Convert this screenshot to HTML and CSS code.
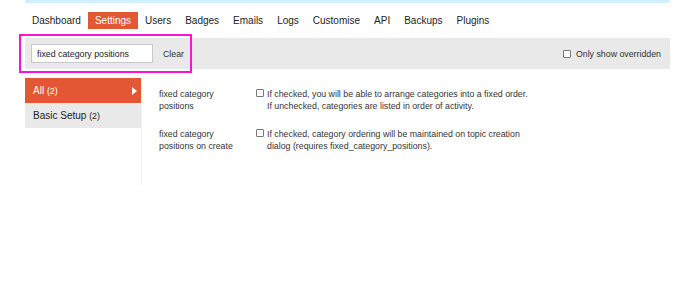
FILE: index.html
```html
<!DOCTYPE html>
<html lang="en">
<head>
    <meta charset="UTF-8">
    <title>Admin - Settings</title>
    <link rel="stylesheet" href="styles.css">
</head>
<body>
<div class="wrap">
    <div class="topbar"></div>
    <ul class="nav">
        <li>Dashboard</li>
        <li class="active">Settings</li>
        <li>Users</li>
        <li>Badges</li>
        <li>Emails</li>
        <li>Logs</li>
        <li>Customise</li>
        <li>API</li>
        <li>Backups</li>
        <li>Plugins</li>
    </ul>
    <div class="filters">
        <div class="search">
            <input type="text" class="filter-txt" value="fixed category positions">
            <span class="clear">Clear</span>
        </div>
        <label class="overridden"><input type="checkbox" class="cb"> Only show overridden</label>
    </div>
    <div class="main">
        <ul class="side">
            <li class="current"><span>All <small>(2)</small></span><i class="arrow"></i></li>
            <li><span>Basic Setup <small>(2)</small></span></li>
        </ul>
        <div class="settings">
            <div class="row">
                <div class="name">fixed category<br>positions</div>
                <div class="value">
                    <input type="checkbox" class="cb">
                    <p>If checked, you will be able to arrange categories into a fixed order.<br>If unchecked, categories are listed in order of activity.</p>
                </div>
            </div>
            <div class="row">
                <div class="name">fixed category<br>positions on create</div>
                <div class="value">
                    <input type="checkbox" class="cb">
                    <p>If checked, category ordering will be maintained on topic creation<br>dialog (requires fixed_category_positions).</p>
                </div>
            </div>
        </div>
    </div>
</div>
</body>
</html>
```

FILE: styles.css
```css
* {
    margin: 0;
    padding: 0;
    box-sizing: border-box;
}
body {
    font-family: "Liberation Sans", Arial, sans-serif;
    color: #222;
    background: #fff;
}
ul {
    list-style-type: none;
}
.wrap {
    width: 645px;
    margin-left: 25px;
}
.topbar {
    height: 3px;
    background-color: #d1f0ff;
}
.nav {
    display: flex;
    margin-top: 9px;
    font-size: 10px;
}
.nav li {
    padding: 0 7px;
    line-height: 17px;
    height: 17px;
}
.nav .active {
    background-color: #e45735;
    color: #fff;
}
.filters {
    display: flex;
    justify-content: space-between;
    align-items: center;
    margin-top: 9px;
    height: 31px;
    background-color: #e9e9e9;
    font-size: 8.8px;
}
.search {
    position: relative;
    display: flex;
    align-items: center;
    padding: 6px 2px 6px 6px;
}
/* pink highlight box drawn over the search */
.search:after {
    content: "";
    position: absolute;
    left: -6px;
    right: -6px;
    top: -4px;
    bottom: -4px;
    border: 2px solid #fb13cf;
}
.filter-txt {
    width: 122px;
    height: 19px;
    padding: 0 5px;
    border: 1px solid #c8c8c8;
    outline: none;
    font-family: inherit;
    font-size: 8.8px;
    color: #222;
    background: #fff;
}
.clear {
    margin-left: 10px;
    color: #333;
}
.overridden {
    display: flex;
    align-items: center;
    padding-right: 9px;
    color: #333;
}
.overridden .cb {
    margin-right: 5px;
}
.cb {
    appearance: none;
    -webkit-appearance: none;
    width: 8px;
    height: 8px;
    border: 1px solid #777;
    border-radius: 1px;
    background: #fff;
    flex-shrink: 0;
}
.main {
    display: flex;
    margin-top: 9px;
}
.side {
    width: 116px;
}
.side li {
    display: flex;
    justify-content: space-between;
    align-items: center;
    height: 25px;
    padding: 0 4px 0 8px;
    background-color: #e9e9e9;
    font-size: 10px;
    color: #222;
}
.side small {
    font-size: 8.8px;
}
.side .current {
    background-color: #e45735;
    color: #fff;
}
.arrow {
    width: 0;
    height: 0;
    border-left: 5px solid #fff;
    border-top: 4px solid transparent;
    border-bottom: 4px solid transparent;
}
.settings {
    min-height: 107px;
    border-left: 1px solid #f0f0f0;
    padding: 10px 0 0 17px;
    font-size: 8.8px;
    line-height: 12px;
    color: #333;
}
.row {
    display: flex;
    margin-bottom: 16px;
}
.name {
    width: 97px;
}
.value {
    display: flex;
    align-items: flex-start;
}
.value .cb {
    margin: 1px 3px 0 0;
}
```
